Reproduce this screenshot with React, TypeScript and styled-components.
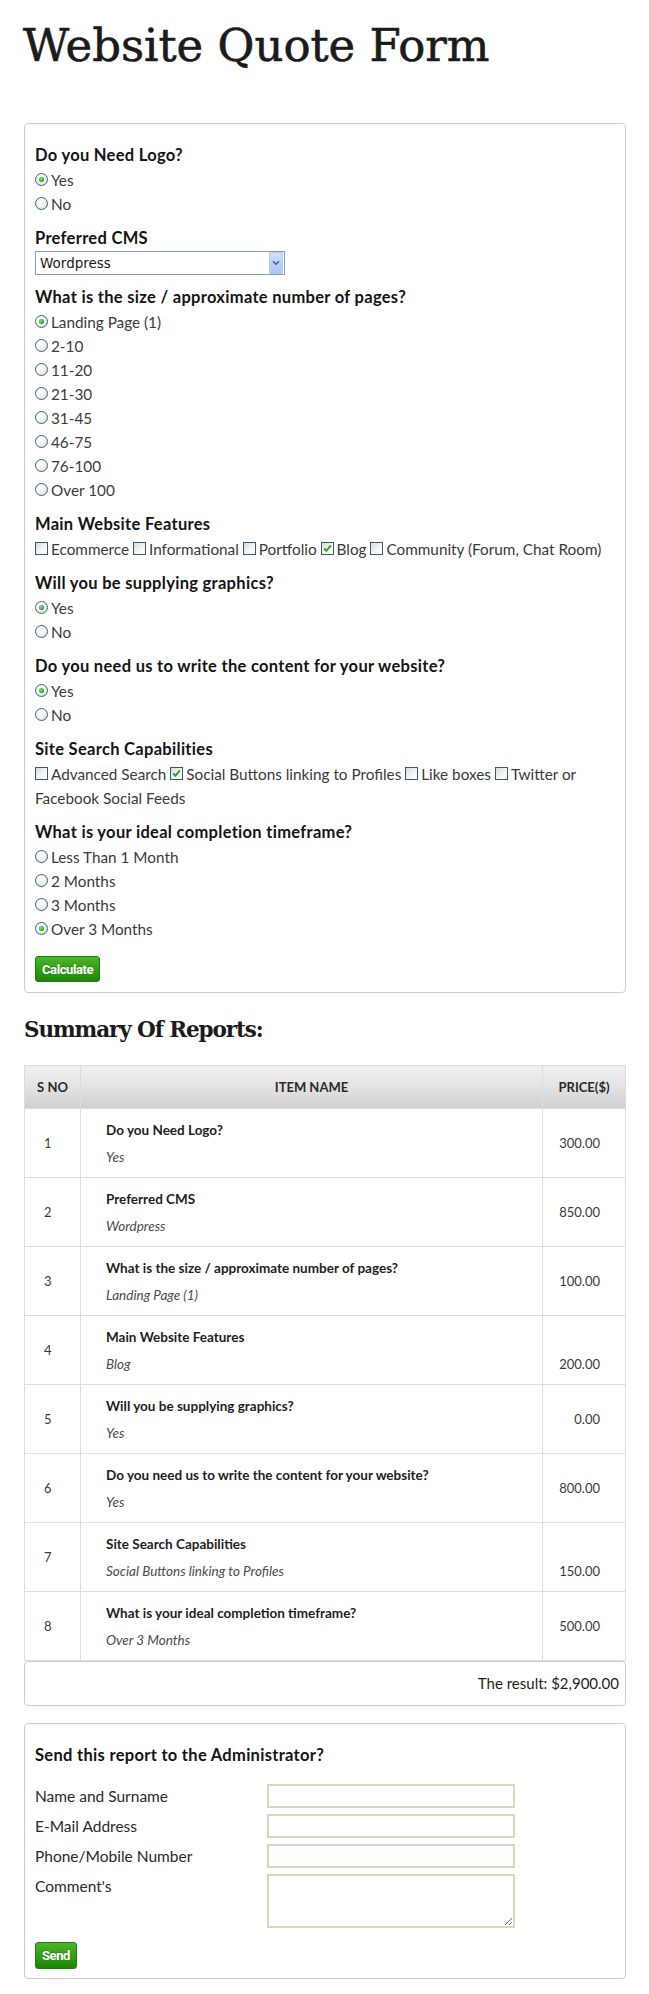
import React from "react";
import styled, { createGlobalStyle } from "styled-components";

const GlobalStyle = createGlobalStyle`
  html, body { margin: 0; padding: 0; background: #fff; }
  body { font-family: Lato, "Noto Sans", sans-serif; color: #333; }
  * { box-sizing: border-box; }
`;

const Page = styled.div`
  width: 602px;
  margin-left: 24px;
  padding: 19px 0 13px;
`;

const Title = styled.h1`
  margin: 0 0 50px -1px;
  font-family: "DejaVu Serif", "Liberation Serif", serif;
  font-weight: normal;
  font-size: 45px;
  line-height: 54px;
  letter-spacing: 0px;
  -webkit-text-stroke: 0.6px #1b1b1b;
  color: #1b1b1b;
`;

const Card = styled.div`
  border: 1px solid #cccccc;
  border-radius: 4px;
  padding: 19px 10px 10px;
  background: #fff;
`;

const Group = styled.div`
  margin-bottom: 10px;
`;

const Label = styled.div`
  font-weight: 700;
  font-size: 16.5px;
  line-height: 24px;
  letter-spacing: 0.3px;
  color: #141414;
  margin-bottom: 1px;
`;

const OptionRow = styled.div`
  font-size: 15.3px;
  line-height: 24px;
  color: #3a3a3a;
`;

const Radio = styled.span<{ $on?: boolean }>`
  display: inline-block;
  position: relative;
  width: 13px;
  height: 13px;
  margin-right: 3px;
  border: 1px solid #2f6494;
  border-radius: 50%;
  background: radial-gradient(circle at 40% 35%, #ffffff 0%, #f3f3ef 45%, #d6d6cf 100%);
  vertical-align: baseline;
  &::after {
    content: "";
    display: ${(p) => (p.$on ? "block" : "none")};
    position: absolute;
    inset: 0;
    margin: auto;
    width: 5px;
    height: 5px;
    border-radius: 50%;
    background: radial-gradient(circle at 40% 40%, #8fe879 0%, #2aa81e 60%, #168a10 100%);
  }
`;

const Check = styled.span`
  display: inline-block;
  position: relative;
  width: 13px;
  height: 13px;
  margin-right: 3px;
  border: 1px solid #2f5a84;
  background: linear-gradient(135deg, #dcdcd6 0%, #f6f6f3 60%, #ffffff 100%);
  vertical-align: baseline;
  svg {
    position: absolute;
    left: 0;
    top: 0;
  }
`;

const SelectBox = styled.div`
  display: flex;
  align-items: center;
  width: 250px;
  height: 24px;
  border: 1px solid #7f9db9;
  background: #fff;
  margin-bottom: 1px;
`;

const SelectText = styled.span`
  flex: 1;
  padding: 0 4px;
  font-family: "DejaVu Sans", Verdana, sans-serif;
  font-size: 13.5px;
  line-height: 16px;
  color: #1a1a1a;
`;

const SelectButton = styled.span`
  align-self: stretch;
  width: 14px;
  margin: 0 1px 0 0;
  display: flex;
  align-items: center;
  justify-content: center;
  border: 1px solid #b8c9f1;
  border-radius: 1px;
  background: linear-gradient(180deg, #d2defb 0%, #bccdf7 50%, #b0c4f4 100%);
`;

const GreenButton = styled.button<{ $h?: number }>`
  display: block;
  height: ${(p) => p.$h ?? 26}px;
  padding: 0 6px;
  border: 1px solid #1e7d0c;
  border-radius: 3px;
  background: linear-gradient(180deg, #4cb62a 0%, #2f9c14 55%, #1c8706 100%);
  color: #fff;
  font-family: Roboto, "Liberation Sans", sans-serif;
  font-weight: 700;
  font-size: 13px;
  letter-spacing: -0.4px;
  text-shadow: 0 -1px 0 rgba(0, 0, 0, 0.2);
  cursor: pointer;
`;

const CalcButton = styled(GreenButton)`
  margin-top: 15px;
`;

const SendButton = styled(GreenButton)`
  margin-top: 14px;
`;

const SectionTitle = styled.h2`
  margin: 22px 0 20px;
  font-family: "DejaVu Serif", "Liberation Serif", serif;
  font-weight: 700;
  font-size: 21.5px;
  line-height: 30px;
  letter-spacing: -1.1px;
  color: #1b1b1b;
`;

const Table = styled.table`
  width: 602px;
  table-layout: fixed;
  border-collapse: separate;
  border-spacing: 0;
  border-top: 1px solid #dddddd;
  border-left: 1px solid #dddddd;
`;

const Th = styled.th<{ $w?: number }>`
  width: ${(p) => (p.$w ? `${p.$w}px` : "auto")};
  height: 43px;
  padding: 0;
  border-right: 1px solid #dddddd;
  border-bottom: 1px solid #dddddd;
  background: linear-gradient(180deg, #f1f1f1 0%, #e3e3e3 50%, #d0d0d0 100%);
  font-weight: 700;
  font-size: 13px;
  text-transform: uppercase;
  text-align: center;
  color: #2a2a2a;
`;

const Td = styled.td<{ $align?: "left" | "right" }>`
  height: 69px;
  padding: 0;
  border-right: 1px solid #dddddd;
  border-bottom: 1px solid #dddddd;
  vertical-align: middle;
  text-align: ${(p) => p.$align ?? "left"};
  font-size: 13px;
  color: #3a3a3a;
`;

const NumCell = styled(Td)`
  padding-left: 19px;
`;

const ItemCell = styled(Td)`
  padding-left: 25px;
`;

const PriceCell = styled(Td)`
  padding-right: 25px;
`;

const ItemTitle = styled.div`
  font-weight: 700;
  font-size: 13.5px;
  line-height: 18px;
  color: #1e1e1e;
`;

const ItemValue = styled.div`
  margin-top: 9px;
  font-style: italic;
  font-size: 13.5px;
  line-height: 18px;
  color: #4a4a4a;
`;

const PriceText = styled.div<{ $low?: boolean }>`
  line-height: 18px;
  padding-top: ${(p) => (p.$low ? 27 : 0)}px;
`;

const ResultBox = styled.div`
  height: 45px;
  border: 1px solid #cccccc;
  border-radius: 4px;
  padding-right: 6px;
  text-align: right;
  font-size: 15px;
  line-height: 43px;
  color: #1e1e1e;
`;

const SendCard = styled(Card)`
  margin-top: 17px;
  padding-bottom: 9px;
`;

const FormGrid = styled.div`
  display: grid;
  grid-template-columns: 232px 248px;
  row-gap: 6px;
  margin-top: 17px;
  align-items: start;
`;

const FormLabel = styled.label`
  font-size: 15.5px;
  line-height: 24px;
  color: #2a2a2a;
`;

const TextInput = styled.input`
  display: block;
  width: 248px;
  height: 24px;
  border: 2px solid #d9d5c1;
  background: #fff;
  padding: 0 4px;
  outline: none;
`;

const TextArea = styled.textarea`
  display: block;
  width: 248px;
  height: 54px;
  border: 2px solid #d9d5c1;
  background: #fff;
  padding: 2px 4px;
  outline: none;
`;

const RadioGroup = ({ label, options, on }: { label: string; options: string[]; on: number }) => (
  <Group>
    <Label>{label}</Label>
    {options.map((o, i) => (
      <OptionRow key={o}>
        <Radio $on={i === on} />
        {o}
      </OptionRow>
    ))}
  </Group>
);

const CheckMark = ({ on }: { on?: boolean }) => (
  <Check>
    {on && (
      <svg width="11" height="11" viewBox="0 0 11 11">
        <path d="M2.2 5.4 L4.4 7.8 L8.8 2.4" fill="none" stroke="#22a11a" strokeWidth="1.8" />
      </svg>
    )}
  </Check>
);

type Opt = string | string[];

const CheckGroup = ({ label, options, on }: { label: string; options: Opt[]; on: number }) => (
  <Group>
    <Label>{label}</Label>
    <OptionRow>
      {options.map((o, i) => (
        <React.Fragment key={i}>
          <CheckMark on={i === on} />
          {Array.isArray(o) ? o.map((part) => <React.Fragment key={part}>{part}</React.Fragment>) : o}
          {i < options.length - 1 ? " " : ""}
        </React.Fragment>
      ))}
    </OptionRow>
  </Group>
);

const rows = [
  { t: "Do you Need Logo?", v: "Yes", p: "300.00" },
  { t: "Preferred CMS", v: "Wordpress", p: "850.00" },
  { t: "What is the size / approximate number of pages?", v: "Landing Page (1)", p: "100.00" },
  { t: "Main Website Features", v: "Blog", p: "200.00", low: true },
  { t: "Will you be supplying graphics?", v: "Yes", p: "0.00" },
  { t: "Do you need us to write the content for your website?", v: "Yes", p: "800.00" },
  { t: "Site Search Capabilities", v: "Social Buttons linking to Profiles", p: "150.00", low: true },
  { t: "What is your ideal completion timeframe?", v: "Over 3 Months", p: "500.00" },
];

export default function App() {
  return (
    <Page>
      <GlobalStyle />
      <Title>Website Quote Form</Title>
      <Card>
        <RadioGroup label="Do you Need Logo?" options={["Yes", "No"]} on={0} />
        <Group>
          <Label>Preferred CMS</Label>
          <SelectBox>
            <SelectText>Wordpress</SelectText>
            <SelectButton>
              <svg width="8" height="6" viewBox="0 0 8 6">
                <path d="M1 1.2 L4 4.2 L7 1.2" fill="none" stroke="#4a5f8c" strokeWidth="1.6" />
              </svg>
            </SelectButton>
          </SelectBox>
        </Group>
        <RadioGroup
          label="What is the size / approximate number of pages?"
          options={["Landing Page (1)", "2-10", "11-20", "21-30", "31-45", "46-75", "76-100", "Over 100"]}
          on={0}
        />
        <CheckGroup
          label="Main Website Features"
          options={["Ecommerce", "Informational", "Portfolio", "Blog", "Community (Forum, Chat Room)"]}
          on={3}
        />
        <RadioGroup label="Will you be supplying graphics?" options={["Yes", "No"]} on={0} />
        <RadioGroup label="Do you need us to write the content for your website?" options={["Yes", "No"]} on={0} />
        <CheckGroup
          label="Site Search Capabilities"
          options={["Advanced Search", "Social Buttons linking to Profiles", "Like boxes", ["Twitter or ", "Facebook Social Feeds"]]}
          on={1}
        />
        <RadioGroup
          label="What is your ideal completion timeframe?"
          options={["Less Than 1 Month", "2 Months", "3 Months", "Over 3 Months"]}
          on={3}
        />
        <CalcButton type="button">Calculate</CalcButton>
      </Card>

      <SectionTitle>Summary Of Reports:</SectionTitle>
      <Table>
        <thead>
          <tr>
            <Th $w={56}>S No</Th>
            <Th>Item Name</Th>
            <Th $w={83}>Price($)</Th>
          </tr>
        </thead>
        <tbody>
          {rows.map((r, i) => (
            <tr key={r.t}>
              <NumCell>{i + 1}</NumCell>
              <ItemCell>
                <ItemTitle>{r.t}</ItemTitle>
                <ItemValue>{r.v}</ItemValue>
              </ItemCell>
              <PriceCell $align="right">
                <PriceText $low={r.low}>{r.p}</PriceText>
              </PriceCell>
            </tr>
          ))}
        </tbody>
      </Table>
      <ResultBox>The result: $2,900.00</ResultBox>

      <SendCard>
        <Label>Send this report to the Administrator?</Label>
        <FormGrid>
          <FormLabel>Name and Surname</FormLabel>
          <TextInput type="text" />
          <FormLabel>E-Mail Address</FormLabel>
          <TextInput type="text" />
          <FormLabel>Phone/Mobile Number</FormLabel>
          <TextInput type="text" />
          <FormLabel>Comment's</FormLabel>
          <TextArea />
        </FormGrid>
        <SendButton type="button" $h={27}>Send</SendButton>
      </SendCard>
    </Page>
  );
}
